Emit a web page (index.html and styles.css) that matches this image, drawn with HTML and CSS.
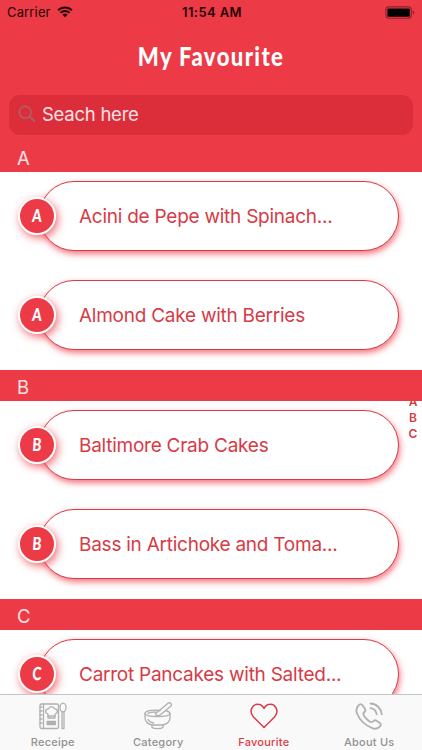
FILE: index.html
```html
<!DOCTYPE html>
<html lang="en">

<head>
    <meta charset="UTF-8">
    <meta name="viewport" content="width=device-width, initial-scale=1.0">
    <title>My Favourite</title>
    <link rel="stylesheet" href="styles.css">
</head>

<body>
    <div class="app">
        <header class="navbar">
            <div class="status-bar">
                <div class="carrier">
                    <span>Carrier</span>
                    <svg width="16" height="12" viewBox="0 0 16 12">
                        <path d="M1 4.4a10 10 0 0 1 14 0M3.4 6.9a6.6 6.6 0 0 1 9.2 0" fill="none" stroke="#260305" stroke-width="2" />
                        <path d="M8 11.3 5.4 8.6a3.8 3.8 0 0 1 5.2 0z" fill="#260305" />
                    </svg>
                </div>
                <span class="time">11:54 AM</span>
                <svg class="battery" width="30" height="13" viewBox="0 0 30 13">
                    <rect x=".9" y=".9" width="25.4" height="11.4" rx="3" fill="none" stroke="#8f2029" stroke-width="1.1" />
                    <rect x="2.4" y="2.4" width="22.4" height="8.4" rx="1.2" fill="#000" />
                    <path d="M27.7 4.6q1.6.6 1.6 2t-1.6 2z" fill="#8f2029" />
                </svg>
            </div>
            <h1>My Favourite</h1>
            <div class="search">
                <svg width="18" height="18" viewBox="0 0 18 18" fill="none" stroke="#ad6068" stroke-width="1.5">
                    <circle cx="7.2" cy="7.2" r="5.9" />
                    <path d="m11.4 11.4 5.3 5.1" stroke-width="1.8" />
                </svg>
                <span>Seach here</span>
            </div>
        </header>

        <main class="list">
            <h2>A</h2>
            <div class="row">
                <div class="badge"><span>A</span></div>
                <div class="pill">Acini de Pepe with Spinach...</div>
            </div>
            <div class="row">
                <div class="badge"><span>A</span></div>
                <div class="pill">Almond Cake with Berries</div>
            </div>
            <h2>B</h2>
            <div class="row">
                <div class="badge"><span>B</span></div>
                <div class="pill">Baltimore Crab Cakes</div>
            </div>
            <div class="row">
                <div class="badge"><span>B</span></div>
                <div class="pill">Bass in Artichoke and Toma...</div>
            </div>
            <h2>C</h2>
            <div class="row">
                <div class="badge"><span>C</span></div>
                <div class="pill">Carrot Pancakes with Salted...</div>
            </div>
            <!-- Letter index, slides under the section headers -->
            <nav class="letters">
                <span>A</span>
                <span>B</span>
                <span>C</span>
            </nav>
        </main>

        <footer class="tabs">
            <a class="tab">
                <svg width="28" height="28" viewBox="0 0 28 28">
                    <rect x="1" y="2" width="18.5" height="24.5" rx="1.5" />
                    <path d="M4.5 2v24.5" />
                    <path d="M1 5h2M1 9h2M1 13h2M1 17h2M1 21h2" />
                    <path d="M9 16v-4c-3.500-1-3-5.500.5-5.200 1-3 5-3 6 0 3.500-.3 4 4.200.5 5.200v4z" />
                    <path d="M9 14h7M8 19.500h8.500M8 22.500h8.500M8 21h8.500" />
                    <ellipse cx="24" cy="5.500" rx="3" ry="4.400" />
                    <path d="M23 10v16.500h2V10" />
                </svg>
                <span>Receipe</span>
            </a>
            <a class="tab">
                <svg width="28" height="28" viewBox="0 0 28 28">
                    <path d="M16 8.500C8 7.500 1 9 1 11.500c0 4 25 4 25 0 0-1.400-1.800-2.200-4-2.700" />
                    <path d="M1 11.500v4c0 3.500 3 6.500 7 7.500h11c4-1 7-4 7-7.500v-4" />
                    <path d="M8 23v2.500c2 1.500 9 1.500 11 0V23" />
                    <path d="M11.500 11.700 24 1.200c1.600-1.300 4.400.6 3 2.700L16.500 12.700c-1.500 1.200-5 1.400-5-1z" />
                    <path d="M4 11.500c1-1 4-1.500 8-1.500M4 17.500c1 2 3 3 5.500 3.500" />
                </svg>
                <span>Category</span>
            </a>
            <a class="tab active">
                <svg width="28" height="28" viewBox="0 0 28 28">
                    <path d="M14 25.500 3.500 15C-2 8.500 3 2 8 2.300c2.700 0 4.700 1.700 6 4.200 1.300-2.500 3.300-4.200 6-4.200 5-.3 10 6.200 4.500 12.700z" />
                </svg>
                <span>Favourite</span>
            </a>
            <a class="tab">
                <svg class="phone" width="28" height="28" viewBox="0 0 28 28">
                    <path d="M3.500 3.500c1.500-1.800 3-1.600 4.200 0l2.200 3.200c1 1.500.5 2.500-.8 3.600-1.500 1.200-1 2.200.2 4 1.400 2 3 3.600 5 5 1.600 1.100 2.600 1.300 3.600.2 1.200-1.500 2.300-1.700 3.700-.8l3.200 2.200c1.300 1 1.300 2.200.2 3.500-2 2.300-4.800 2.900-7.800 1.700C10.500 23.500 5 18.500 2 11.500.8 8.500 1.200 5.800 3.500 3.500z" />
                    <path d="M15.500 6.200c3.200.4 5.500 2.700 6.200 6M15.500 1.500c6 .3 10.600 4.700 11.300 10.900" />
                </svg>
                <span>About Us</span>
            </a>
        </footer>
    </div>
</body>

</html>
```
FILE: styles.css
```css
* {
    box-sizing: border-box;
}

body {
    margin: 0;
    font-family: Inter, "Liberation Sans", sans-serif;
    background-color: #fff;
}

.app {
    width: 422px;
    height: 750px;
    display: flex;
    flex-direction: column;
    overflow: hidden;
}

/* Top bar */
.navbar {
    height: 141px;
    flex-shrink: 0;
    background-color: #ec3b47;
}

.status-bar {
    height: 24px;
    padding: 0 7px;
    display: grid;
    grid-template-columns: 1fr auto 1fr;
    align-items: center;
    color: #260305;
    font-size: 13px;
}

.carrier {
    display: flex;
    align-items: center;
    gap: 6px;
    letter-spacing: 0.15px;
}

.time {
    padding-left: 2px;
    font-weight: 600;
    letter-spacing: 0.4px;
}

.battery {
    justify-self: end;
}

h1 {
    height: 65px;
    margin: 0;
    color: #fff;
    font-family: "Chalkboard SE", Lato, sans-serif;
    font-size: 26px;
    font-weight: 900;
    letter-spacing: 1.6px;
    line-height: 64px;
    text-align: center;
    transform: scaleX(0.85);
}

.search {
    height: 40px;
    margin: 6px 9px 0;
    padding: 0 9px 2px;
    display: flex;
    align-items: center;
    gap: 6px;
    border-radius: 11px;
    background-color: #dc2e3a;
    color: #fde3e5;
    font-size: 18.5px;
    letter-spacing: -0.25px;
}

/* Recipe list */
.list {
    position: relative;
    flex: 1;
    min-height: 0;
    overflow: hidden;
}

h2 {
    position: relative;
    z-index: 1;
    height: 31px;
    margin: 0;
    padding-left: 17px;
    background-color: #ec3b47;
    color: #fde3e5;
    font-size: 18.5px;
    font-weight: 400;
    line-height: 34px;
}

.row {
    height: 99px;
    padding: 9px 23px 0 18px;
    display: flex;
}

.badge {
    z-index: 1;
    width: 38px;
    height: 38px;
    margin-top: 16px;
    flex-shrink: 0;
    border: 2px solid #fff;
    border-radius: 50%;
    background-color: #ec3b47;
    box-shadow: 2px 3px 9px rgba(236, 59, 71, 0.75);
    color: #fff;
    font-family: "Chalkboard SE", Lato, sans-serif;
    font-size: 18px;
    font-weight: 900;
    line-height: 33px;
    text-align: center;
}

.badge span {
    display: block;
    transform: scaleX(0.76) skewX(-5deg);
}

.pill {
    height: 70px;
    margin-left: -17px;
    padding: 0 0 0 39px;
    flex: 1;
    display: flex;
    align-items: center;
    border: 1px solid #d63c47;
    border-radius: 35px;
    background-color: #fff;
    box-shadow: 1px 3px 6px rgba(236, 59, 71, 0.7);
    color: #d63b46;
    font-size: 19px;
    letter-spacing: -0.25px;
    white-space: nowrap;
}

.letters {
    position: absolute;
    top: 253px;
    right: 4px;
    width: 10px;
    display: flex;
    flex-direction: column;
    align-items: center;
    color: #d63b46;
    font-size: 12px;
    font-weight: 600;
    line-height: 16px;
}

/* Bottom tabs */
.tabs {
    height: 56px;
    flex-shrink: 0;
    display: grid;
    grid-template-columns: repeat(4, 1fr);
    border-top: 1px solid #c4c4c4;
    background-color: #f9f9f9;
}

.tab {
    padding-top: 7px;
    display: flex;
    flex-direction: column;
    align-items: center;
    gap: 5px;
    color: #929292;
    font-size: 11px;
    font-weight: 500;
    letter-spacing: 0.25px;
    line-height: 14px;
}

.tab svg {
    fill: none;
    stroke: #b0b0b0;
    stroke-width: 1.3;
    stroke-linejoin: round;
    stroke-linecap: round;
}

.tab.active {
    color: #e03b47;
}

.tab.active svg {
    stroke: #d63b46;
    stroke-width: 1.5;
}

.tab .phone {
    stroke-width: 1.8;
}
```
